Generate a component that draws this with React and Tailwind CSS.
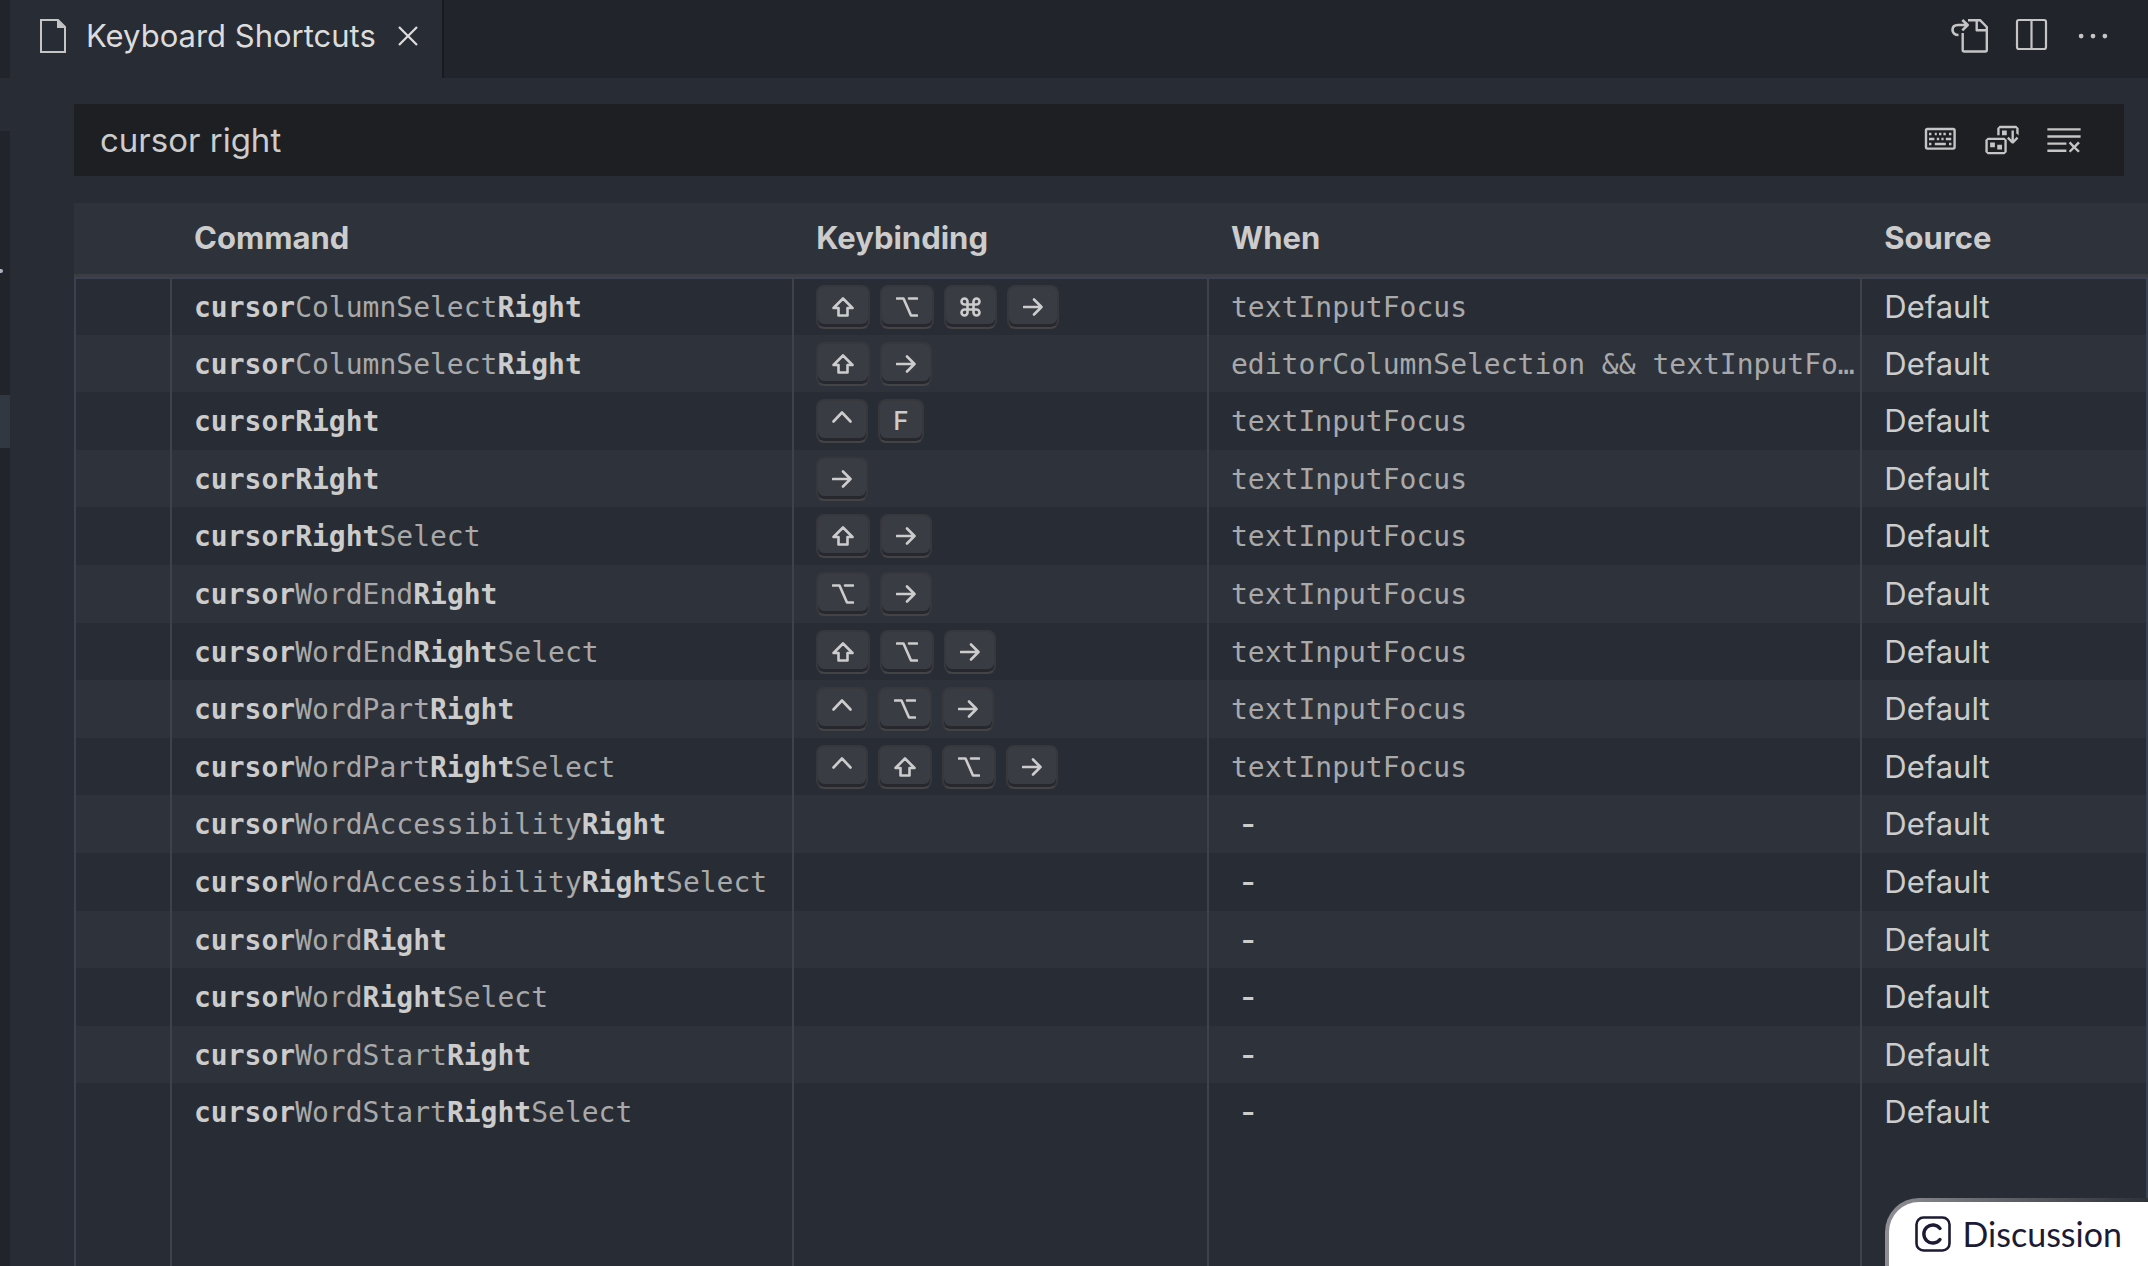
import { useState } from "react";
import { VscClearAll, VscClose, VscEllipsis, VscSortPrecedence } from "react-icons/vsc";

// words wrapped in * are the parts that match the search
const SHORTCUTS = [
  { command: "*cursor*ColumnSelect*Right*", keys: ["shift", "option", "command", "right"], when: "textInputFocus" },
  { command: "*cursor*ColumnSelect*Right*", keys: ["shift", "right"], when: "editorColumnSelection && textInputFocus" },
  { command: "*cursorRight*", keys: ["control", "F"], when: "textInputFocus" },
  { command: "*cursorRight*", keys: ["right"], when: "textInputFocus" },
  { command: "*cursorRight*Select", keys: ["shift", "right"], when: "textInputFocus" },
  { command: "*cursor*WordEnd*Right*", keys: ["option", "right"], when: "textInputFocus" },
  { command: "*cursor*WordEnd*Right*Select", keys: ["shift", "option", "right"], when: "textInputFocus" },
  { command: "*cursor*WordPart*Right*", keys: ["control", "option", "right"], when: "textInputFocus" },
  { command: "*cursor*WordPart*Right*Select", keys: ["control", "shift", "option", "right"], when: "textInputFocus" },
  { command: "*cursor*WordAccessibility*Right*", keys: [] },
  { command: "*cursor*WordAccessibility*Right*Select", keys: [] },
  { command: "*cursor*Word*Right*", keys: [] },
  { command: "*cursor*Word*Right*Select", keys: [] },
  { command: "*cursor*WordStart*Right*", keys: [] },
  { command: "*cursor*WordStart*Right*Select", keys: [] },
];

const ROW_HEIGHTS = ["h-[58px]", "h-[57px]", "h-[58px]", "h-[57px]", "h-[58px]"];

const GLYPHS = {
  shift: { width: 22, d: "M11 1.5 L20.5 11 H15.5 V18.5 H6.5 V11 H1.5 Z" },
  option: { width: 22, d: "M1 1.5 H7.5 L15 18.5 H21 M13 1.5 H21" },
  command: {
    width: 21,
    d: "M7.5 7.5 H13.5 V12.5 H7.5 Z M7.5 7.5 V4.5 A3 3 0 1 0 4.5 7.5 Z M13.5 7.5 H16.5 A3 3 0 1 0 13.5 4.5 Z M13.5 12.5 V15.5 A3 3 0 1 0 16.5 12.5 Z M7.5 12.5 H4.5 A3 3 0 1 0 7.5 15.5 Z",
  },
  right: { width: 20, d: "M1 10 H18.5 M11 2.5 L18.5 10 L11 17.5" },
  control: { width: 20, d: "M1.5 10.5 L10 1.5 L18.5 10.5" },
};

function Key({ name }) {
  const glyph = GLYPHS[name];
  return (
    <kbd className="flex h-[44px] items-center justify-center rounded-lg border-2 border-[#36383c] border-b-[#444446] bg-[#393c43] px-[13px] font-['Inter',sans-serif] text-[26px] leading-none font-medium text-[#cccccc] shadow-[inset_0_-3px_0_#26282d]">
      {glyph ? (
        <svg
          className="mx-px"
          width={glyph.width}
          height="20"
          viewBox={`0 0 ${glyph.width} 20`}
          fill="none"
          stroke="currentColor"
          strokeWidth="2.6"
          strokeLinecap="round"
          strokeLinejoin="round"
          role="img"
          aria-label={name}
        >
          <path d={glyph.d} />
        </svg>
      ) : (
        name
      )}
    </kbd>
  );
}

function Command({ text }) {
  return text.split("*").map((part, i) =>
    i % 2 ? (
      <b key={i} className="font-bold text-[#cccccc]">{part}</b>
    ) : (
      <span key={i}>{part}</span>
    )
  );
}

function GoToFileIcon() {
  return (
    <svg width="38" height="38" viewBox="0 0 38 38" fill="none" stroke="currentColor" strokeWidth="2.4" strokeLinejoin="round">
      <path d="M18 3.2 H30 L36.8 10 V33 Q36.8 34.5 35.3 34.5 H14.2 Q12.7 34.5 12.7 33 V16" />
      <path d="M26.7 3.2 V13.2 H36.8" />
      <path d="M8.5 18 C4.5 18 2.5 15.5 2.5 13 C2.5 10 4.5 8 8 8 H17.5 M12.3 3 L17.7 8 L12.3 13.4" strokeWidth="2.6" />
    </svg>
  );
}

function SplitIcon() {
  return (
    <svg width="38" height="38" viewBox="0 0 38 38" fill="none" stroke="currentColor" strokeWidth="2.2">
      <rect x="5" y="3" width="29" height="29" rx="2" />
      <path d="M19.5 3 V32" />
    </svg>
  );
}

function KeyboardIcon() {
  return (
    <svg width="38" height="38" viewBox="0 0 38 38" fill="none" stroke="currentColor" strokeWidth="2.4">
      <rect x="5" y="8" width="28.6" height="19.6" rx="1.5" />
      <path d="M8 13 h2.4 M13.8 13 h2 M18 13 h2.4 M22.4 13 h2.4 M28 13 h2.4" />
      <path d="M8 18 h5.4 M15.8 18 h2.4 M20.4 18 h2.2 M24.8 18 h5.4" />
      <path d="M8 23 h2.4 M13.8 23 h11 M28 23 h2.4" />
    </svg>
  );
}

function IconButton({ label, children }) {
  return (
    <button type="button" aria-label={label} className="flex size-10 items-center justify-center text-[38px] text-[#c5c5c5]">
      {children}
    </button>
  );
}

export default function App() {
  const [query, setQuery] = useState("cursor right");

  return (
    <div className="flex h-screen overflow-hidden bg-[#282c34] font-['Inter',sans-serif] text-[31px] text-[#cccccc]">
      {/* Edge of the side bar */}
      <div className="flex w-[10px] shrink-0 flex-col">
        <div className="h-[78px] bg-[#21252b]" />
        <div className="h-[53px]" />
        <div className="flex flex-1 flex-col bg-[#21252b] pt-[138px]">
          <div className="h-1 w-[3px] rounded-r-full bg-[#abb2bf]" />
          <div className="mt-[122px] h-[53px] bg-[#323842]" />
        </div>
      </div>

      <main className="flex min-w-0 flex-1 flex-col">
        <header className="flex h-[78px] shrink-0 justify-between bg-[#21252b]">
          <div className="flex items-center border-r-2 border-[#181a1f] bg-[#282c34] pr-4 pb-1.5 pl-[30px] text-[#dcdcdc]">
            <svg width="26" height="34" viewBox="0 0 26 34" fill="none" stroke="#c5c5c5" strokeWidth="2">
              <path d="M1 1 H18 L25 8 V33 H1 Z" />
              <path d="M17 1 V9 H25 Z" fill="#c5c5c5" stroke="none" />
            </svg>
            <span className="ml-5">Keyboard Shortcuts</span>
            <button type="button" aria-label="Close" className="ml-3.5 flex size-9 items-center justify-center text-[36px]">
              <VscClose />
            </button>
          </div>
          <div className="flex items-center gap-[22px] pr-[35px] pb-1.5">
            <IconButton label="Open Keyboard Shortcuts (JSON)"><GoToFileIcon /></IconButton>
            <IconButton label="Split Editor Right"><SplitIcon /></IconButton>
            <IconButton label="More Actions"><VscEllipsis /></IconButton>
          </div>
        </header>

        <div className="mt-[26px] mr-6 ml-16 flex h-[72px] shrink-0 items-center bg-[#1d1f23] pr-10 pl-[26px]">
          <input
            type="text"
            aria-label="Search keybindings"
            className="min-w-0 flex-1 bg-transparent pt-0.5 text-[33px] outline-none"
            value={query}
            onChange={(e) => setQuery(e.target.value)}
          />
          <div className="flex gap-[22px]">
            <IconButton label="Record Keys"><KeyboardIcon /></IconButton>
            <IconButton label="Sort by Precedence"><VscSortPrecedence /></IconButton>
            <IconButton label="Clear Search"><VscClearAll /></IconButton>
          </div>
        </div>

        <div className="mt-[27px] ml-16 min-h-0 flex-1">
          <table className="h-full w-full table-fixed border-separate border-spacing-0 text-left">
            <colgroup>
              <col className="w-[96px]" />
              <col className="w-[30%]" />
              <col className="w-[20%]" />
              <col className="w-[31.5%]" />
              <col />
            </colgroup>
            <thead className="[&_th]:border-b-3 [&_th]:border-[#3a3d44] [&_th]:p-0 [&_th]:pl-6 [&_th]:font-bold">
              <tr className="h-[74px] bg-[#2e323a]">
                <th aria-label="Actions" />
                <th>Command</th>
                <th>Keybinding</th>
                <th>When</th>
                <th>Source</th>
              </tr>
            </thead>
            <tbody className="[&_td]:border-l-2 [&_td]:border-[#3f4249] [&_td]:p-0 [&_td:first-child]:border-l-[#3b4150] [&_td:last-child]:border-r-2 [&_td:last-child]:border-r-[#3b4150] [&_tr:first-child_td]:border-t-2 [&_tr:first-child_td]:border-t-[#3b4150]">
              {SHORTCUTS.map((row, i) => (
                <tr key={i} className={`${ROW_HEIGHTS[i % 5]} ${i % 2 ? "bg-[#2e323a]" : ""}`}>
                  <td />
                  <td>
                    <div className="truncate pt-0.5 pl-[22px] font-['DejaVu_Sans_Mono',monospace] text-[28px] leading-10 text-[#a8a9aa]">
                      <Command text={row.command} />
                    </div>
                  </td>
                  <td>
                    <div className="flex gap-2.5 pl-[22px]">
                      {row.keys.map((key) => (
                        <Key key={key} name={key} />
                      ))}
                    </div>
                  </td>
                  <td>
                    {row.when ? (
                      <div className="truncate pt-0.5 pr-1 pl-[22px] font-['DejaVu_Sans_Mono',monospace] text-[28px] leading-10 text-[#a8a9aa]">
                        {row.when}
                      </div>
                    ) : (
                      <div className="pl-8 leading-10 font-medium">-</div>
                    )}
                  </td>
                  <td>
                    <div className="truncate pl-[22px] leading-10">Default</div>
                  </td>
                </tr>
              ))}
              {/* Carries the column lines down to the bottom */}
              <tr>
                <td />
                <td />
                <td />
                <td />
                <td />
              </tr>
            </tbody>
          </table>
        </div>
      </main>

      <a
        href="#discussion"
        className="absolute right-0 bottom-0 rounded-tl-[34px] bg-linear-to-r from-[#8f8f94] to-[#2d3139] pt-1 pl-1"
      >
        <span className="flex h-16 items-center gap-3 rounded-tl-[30px] bg-white pr-[26px] pl-[26px] font-['Lato',sans-serif] text-[34px] leading-none text-[#1c1b33]">
          <svg width="36" height="36" viewBox="0 0 36 36" fill="none" stroke="currentColor" strokeWidth="2.6" strokeLinecap="round">
            <rect x="1.5" y="1.5" width="33" height="33" rx="7" />
            <path d="M25 12.5 A9 9 0 1 0 25 23.5" strokeWidth="3.4" />
          </svg>
          Discussion
        </span>
      </a>
    </div>
  );
}
